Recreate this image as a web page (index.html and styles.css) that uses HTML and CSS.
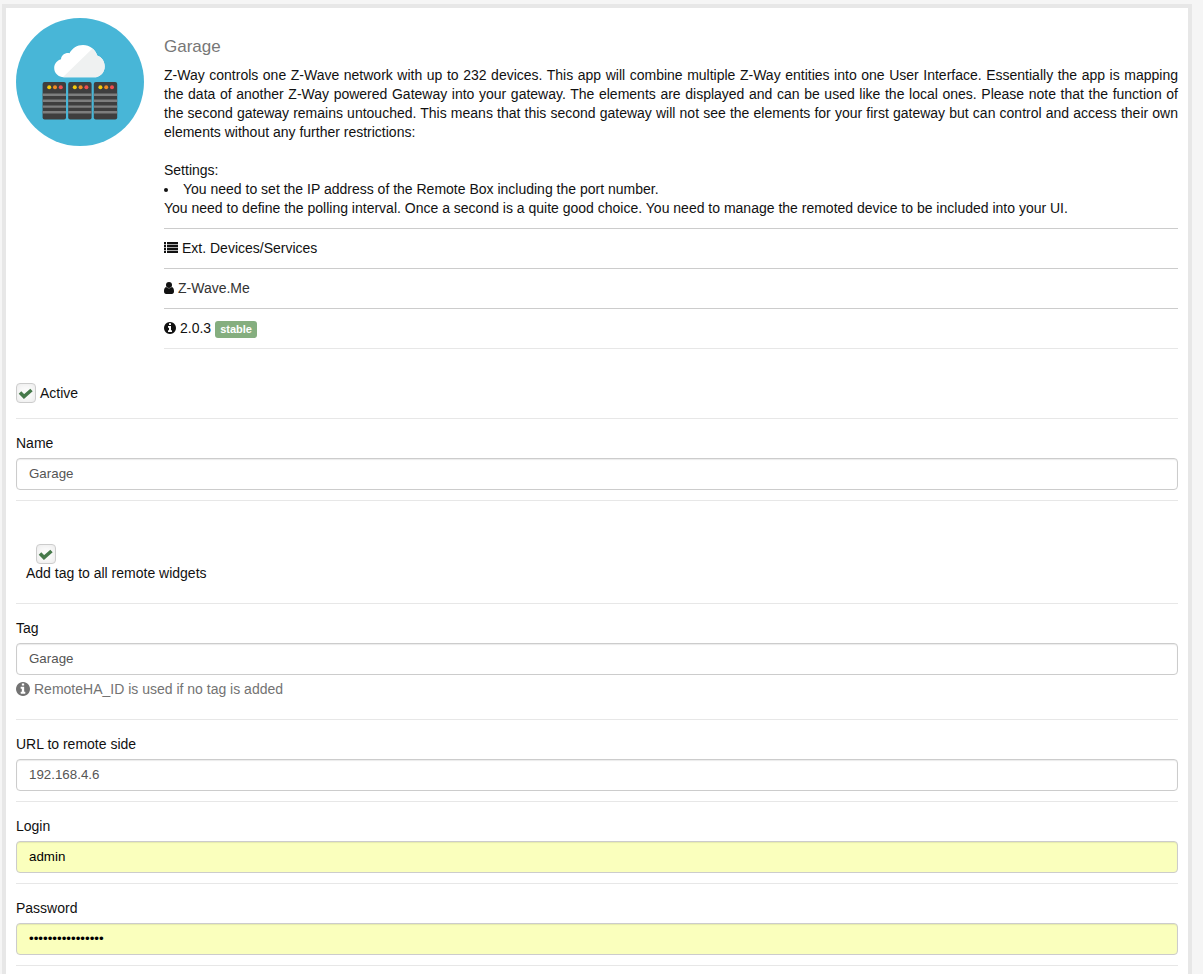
FILE: index.html
```html
<!DOCTYPE html>
<html lang="en">
<head>
<meta charset="utf-8">
<title>Garage</title>
<link rel="stylesheet" href="styles.css">
</head>
<body>
<main class="panel">
  <header class="app">
    <svg class="app-logo" viewBox="0 0 128 128" aria-hidden="true">
      <defs>
        <g id="server">
          <rect width="23.4" height="37.6" rx="2" fill="#3e3e3e"/>
          <circle cx="6.6" cy="5.2" r="2" fill="#f3c90b"/>
          <circle cx="12.4" cy="5.2" r="2" fill="#ee8a22"/>
          <circle cx="18.2" cy="5.2" r="2" fill="#ee4e50"/>
          <path d="M0 11.600h23.4v2.400H0zM0 17.600h23.4v2.400H0zM0 23.400h23.4v2.400H0zM0 29h23.4v2.400H0z" fill="#7d7e7e"/>
        </g>
        <clipPath id="cloud">
          <path d="M48 59.300C42.500 59.300 38.200 55.200 38.200 50C38.200 45.800 41 42.300 45 41.200C45.300 37.500 48.700 34.600 53.500 35.200C56 30.400 61 27 67 27C73.800 27 79.300 31.400 81.200 37.600C85.600 39.100 88.700 43.200 88.700 48.400C88.700 54.600 83.900 59.300 78 59.300Z"/>
        </clipPath>
      </defs>
      <circle cx="64" cy="64" r="64" fill="#48b6d7"/>
      <g clip-path="url(#cloud)">
        <rect x="36" y="25" width="56" height="36" fill="#fff"/>
        <path d="M46 60L78 29L92 29V60Z" fill="#eff1f1"/>
      </g>
      <use href="#server" x="26.600" y="64"/>
      <use href="#server" x="52.200" y="64"/>
      <use href="#server" x="77.800" y="64"/>
    </svg>
    <div class="app-info">
      <h1 class="app-title">Garage</h1>
      <div class="app-row app-description">
        <p>Z-Way controls one Z-Wave network with up to 232 devices. This app will combine multiple Z-Way entities into one User Interface. Essentially the app is mapping the data of another Z-Way powered Gateway into your gateway. The elements are displayed and can be used like the local ones. Please note that the function of the second gateway remains untouched. This means that this second gateway will not see the elements for your first gateway but can control and access their own elements without any further restrictions:</p>
        <br>
        <p>Settings:</p>
        <ul class="settings">
          <li>You need to set the IP address of the Remote Box including the port number.</li>
        </ul>
        <p>You need to define the polling interval. Once a second is a quite good choice. You need to manage the remoted device to be included into your UI.</p>
      </div>
      <div class="app-row">
        <svg class="icon icon-list" viewBox="0 0 14 12" aria-hidden="true"><path d="M0 0h2v11H0zM3 0h11v11H3z" opacity=".35"/><path d="M0 0h2v2H0zM3 0h11v2H3zM0 3h2v2H0zM3 3h11v2H3zM0 6h2v2H0zM3 6h11v2H3zM0 9h2v2H0zM3 9h11v2H3z"/></svg>
        <span>Ext. Devices/Services</span>
      </div>
      <div class="app-row">
        <svg class="icon icon-user" viewBox="0 0 10 12" aria-hidden="true"><circle cx="5" cy="3" r="3"/><path d="M2.200 5C.6 5.400 0 7 0 9.300C0 11 .8 12 2.200 12H7.800C9.200 12 10 11 10 9.300C10 7 9.400 5.400 7.800 5C7 6 6 6.200 5 6.200S3 6 2.200 5Z"/></svg>
        <a class="author" href="#">Z-Wave.Me</a>
      </div>
      <div class="app-row app-row-last">
        <svg class="icon icon-version" viewBox="128 128 1536 1536" aria-hidden="true"><path id="info" d="M1152 1376v-160q0-14-9-23t-23-9h-96v-512q0-14-9-23t-23-9h-320q-14 0-23 9t-9 23v160q0 14 9 23t23 9h96v320h-96q-14 0-23 9t-9 23v160q0 14 9 23t23 9h448q14 0 23-9t9-23zm-128-896v-160q0-14-9-23t-23-9h-192q-14 0-23 9t-9 23v160q0 14 9 23t23 9h192q14 0 23-9t9-23zm640 416q0 209-103 385.500t-279.500 279.500-385.500 103-385.500-103-279.500-279.500-103-385.500 103-385.500 279.500-279.500 385.500-103 385.500 103 279.500 279.500 103 385.500z"/></svg>
        <span>2.0.3</span>
        <span class="badge">stable</span>
      </div>
    </div>
  </header>

  <form class="form">
    <div class="group group-active">
      <input class="check" type="checkbox" id="active" checked>
      <label for="active">Active</label>
    </div>
    <div class="group">
      <label class="label" for="name">Name</label>
      <input class="field" type="text" id="name" value="Garage">
    </div>
    <div class="group group-option">
      <input class="check check-option" type="checkbox" id="add-tag" checked>
      <label for="add-tag">Add tag to all remote widgets</label>
    </div>
    <div class="group">
      <label class="label" for="tag">Tag</label>
      <input class="field" type="text" id="tag" value="Garage" aria-describedby="tag-help">
      <p class="help" id="tag-help">
        <svg class="icon icon-help" viewBox="128 128 1536 1536" aria-hidden="true"><use href="#info"/></svg>
        <span>RemoteHA_ID is used if no tag is added</span>
      </p>
    </div>
    <div class="group">
      <label class="label" for="url">URL to remote side</label>
      <input class="field" type="text" id="url" value="192.168.4.6">
    </div>
    <div class="group">
      <label class="label" for="login">Login</label>
      <input class="field field-filled" type="text" id="login" value="admin">
    </div>
    <div class="group">
      <label class="label" for="password">Password</label>
      <input class="field field-filled" type="password" id="password" value="garagegatewaypwd">
    </div>
  </form>
</main>
</body>
</html>
```
FILE: styles.css
```css
* {
  box-sizing: border-box;
}

body {
  margin: 0;
  padding: 4px 11px 0 2px;
  background: #f5f5f5;
  color: #111;
  font-family: "Liberation Sans", Arial, sans-serif;
  font-size: 14px;
  line-height: 19px;
}

p {
  margin: 0;
}

.panel {
  min-height: calc(100vh - 4px);
  padding: 10px 10px 0;
  border: 4px solid #e7e7e7;
  border-bottom: 0;
  background: #fff;
}

.app {
  display: flex;
  gap: 20px;
  align-items: flex-start;
}

.app-logo {
  flex: none;
  width: 128px;
  height: 128px;
}

.app-info {
  flex: 1;
  min-width: 0;
  padding-top: 19px;
}

.app-title {
  margin: 0 0 9px;
  color: #777;
  font-size: 17px;
  font-weight: 400;
  line-height: 20px;
}

.app-row {
  display: flex;
  gap: 4px;
  align-items: center;
  padding: 10px 0;
  border-bottom: 1px solid #ccc;
}

.app-row-last {
  border-bottom-color: #e7e7e7;
}

.app-description {
  display: block;
  padding-top: 0;
  text-align: justify;
}

.settings {
  margin: 0;
  padding: 0;
  list-style: disc inside;
}

.icon {
  flex: none;
  margin-bottom: 1px;
  fill: currentColor;
}

.icon-list {
  width: 14px;
  height: 12px;
}

.icon-user {
  width: 10px;
  height: 12px;
}

.icon-version {
  width: 12px;
  height: 12px;
}

.icon-help {
  width: 14px;
  height: 14px;
  margin-bottom: 2px;
}

.author {
  color: #333;
  text-decoration: none;
}

.badge {
  height: 17px;
  margin-top: 2px;
  padding: 0 5px;
  border-radius: 3px;
  background: #85ae7f;
  color: #fff;
  font-size: 11px;
  font-weight: 700;
  line-height: 17px;
}

.group {
  padding: 15px 0 10px;
  border-bottom: 1px solid #e7e7e7;
}

.group-active {
  display: flex;
  gap: 4px;
  align-items: center;
  padding: 34px 0 15px;
}

.group-option {
  display: flex;
  flex-direction: column;
  align-items: flex-start;
  padding: 43px 10px 20px;
}

.label {
  display: block;
  margin-bottom: 5px;
}

.field {
  display: block;
  width: 100%;
  height: 32px;
  padding: 0 12px 2px;
  border: 1px solid #ccc;
  border-radius: 4px;
  background: #fff;
  box-shadow: inset 0 1px 1px rgba(0, 0, 0, 0.08);
  color: #555;
  font-family: inherit;
}

.field-filled {
  background: #faffbd;
  color: #000;
}

.check {
  appearance: none;
  width: 20px;
  height: 20px;
  margin: 0;
  border: 1px solid #ccc;
  border-radius: 4px;
  background: #fafafa;
  box-shadow: inset 0 0 6px rgba(0, 0, 0, 0.08);
}

.check:checked {
  background: #fafafa url("data:image/svg+xml,%3Csvg xmlns='http://www.w3.org/2000/svg' viewBox='0 0 18 18'%3E%3Cpath d='M3 8.500L7 12.500L14.500 6' fill='none' stroke='%23477a4b' stroke-width='3.600'/%3E%3C/svg%3E") center / 18px 18px no-repeat;
}

.check-option {
  margin-left: 10px;
}

.help {
  display: flex;
  gap: 4px;
  align-items: center;
  margin: 5px 0 10px;
  color: #737373;
}
```
